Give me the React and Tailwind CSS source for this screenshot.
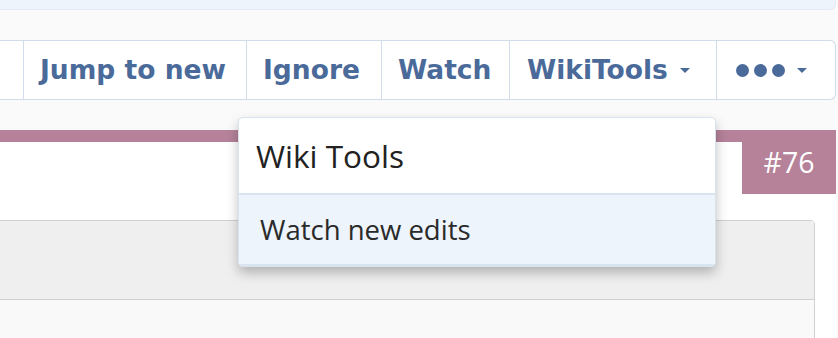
import React from 'react';

function Caret() {
  return (
    <svg className="ml-[12px] w-[10px] h-[5px]" viewBox="0 0 10 5">
      <polygon points="0,0 10,0 5,5" fill="currentColor" />
    </svg>
  );
}

export default function App() {
  const cell = "h-full flex items-center border-r-[1.5px] border-[#d0dcea] shrink-0";

  return (
    <div className="relative w-[838px] h-[338px] overflow-hidden bg-[#fafafa]" style={{ fontFamily: '"Open Sans", sans-serif' }}>
      {/* top strip */}
      <div className="w-[836px] h-[10px] bg-[#edf4fb] rounded-br-[6px] border-r border-b border-[#e3ebf4]"></div>

      {/* button bar */}
      <div
        className="mt-[30px] w-[836px] h-[60px] flex bg-white border-y-[1.5px] border-r-[1.5px] border-[#d0dcea] rounded-r-[6px] text-[#4a6a9a] font-bold text-[26.5px]"
        style={{ fontFamily: '"DejaVu Sans", Verdana, sans-serif' }}
      >
        <div className={`${cell} w-[24px]`}></div>
        <div className={`${cell} w-[223px] pl-[16px]`}>Jump to new</div>
        <div className={`${cell} w-[135px] pl-[16px]`}>Ignore</div>
        <div className={`${cell} w-[128px] pl-[16px]`}>Watch</div>
        <div className={`${cell} w-[207px] pl-[17px]`}>
          WikiTools
          <Caret />
        </div>
        <div className="h-full flex items-center pl-[19px] flex-1">
          <span className="flex gap-[5px]">
            <span className="w-[13px] h-[13px] rounded-full bg-[#4a6a9a]"></span>
            <span className="w-[13px] h-[13px] rounded-full bg-[#4a6a9a]"></span>
            <span className="w-[13px] h-[13px] rounded-full bg-[#4a6a9a]"></span>
          </span>
          <Caret />
        </div>
      </div>

      {/* post area */}
      <div className="mt-[30px] w-[836px] h-[208px] bg-white">
        <div className="flex items-start">
          <div className="flex-1 h-[12px] bg-[#b5829a]"></div>
          <div className="w-[94px] h-[64px] bg-[#b5829a] text-white text-[28.5px] flex items-center justify-center">
            #76
          </div>
        </div>
        <div className="mt-[26px] w-[816px] -ml-px border-[1.5px] border-[#d0d0d0] rounded-tr-[4px]">
          <div className="h-[79px] bg-[#efefef] border-b-[1.5px] border-[#d0d0d0]"></div>
          <div className="h-[40px] bg-[#f9f9f9]"></div>
        </div>
      </div>

      {/* dropdown menu */}
      <div className="absolute left-[238px] top-[117px] w-[478px] rounded-[5px] border border-[#d8e3ef] bg-white shadow-[0_6px_12px_rgba(0,0,0,0.25)] overflow-hidden">
        <div className="h-[75px] flex items-center pl-[17px] text-[31.5px] text-[#222]">Wiki Tools</div>
        <div className="h-[73px] flex items-center pl-[21px] bg-[#edf4fb] border-t-2 border-b-2 border-[#dae4ef] text-[27.5px] text-[#2a2a2a]">
          Watch new edits
        </div>
      </div>
    </div>
  );
}
